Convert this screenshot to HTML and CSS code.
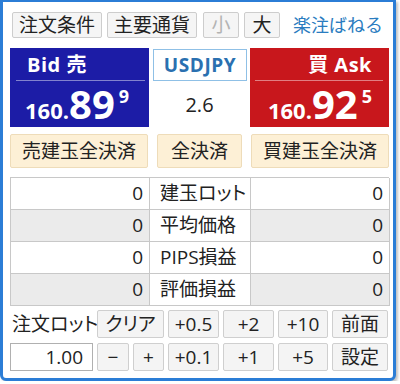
FILE: index.html
```html
<!DOCTYPE html>
<html lang="ja">
<head>
<meta charset="utf-8">
<title>楽注ばねる</title>
<link rel="stylesheet" href="styles.css">
</head>
<body>
<div class="window">
  <div class="toolbar">
    <div class="tb w90">注文条件</div>
    <div class="tb w90">主要通貨</div>
    <div class="tb sq disabled gap1">小</div>
    <div class="tb sq">大</div>
    <div class="brand">楽注ばねる</div>
  </div>

  <div class="quotes">
    <div class="panel bid">
      <div class="ph">Bid 売</div>
      <div class="price"><span class="pre">160.</span><span class="big">89</span><span class="pip">9</span></div>
    </div>
    <div class="mid">
      <div class="sym">USDJPY</div>
      <div class="spread">2.6</div>
    </div>
    <div class="panel ask">
      <div class="ph">買 Ask</div>
      <div class="price"><span class="pre">160.</span><span class="big">92</span><span class="pip">5</span></div>
    </div>
  </div>

  <div class="actions">
    <div class="act">売建玉全決済</div>
    <div class="act">全決済</div>
    <div class="act">買建玉全決済</div>
  </div>

  <div class="grid">
    <div class="cell val">0</div>
    <div class="cell lbl">建玉ロット</div>
    <div class="cell val">0</div>

    <div class="cell val alt">0</div>
    <div class="cell lbl">平均価格</div>
    <div class="cell val alt">0</div>

    <div class="cell val">0</div>
    <div class="cell lbl">PIPS損益</div>
    <div class="cell val">0</div>

    <div class="cell val alt">0</div>
    <div class="cell lbl">評価損益</div>
    <div class="cell val alt">0</div>
  </div>

  <div class="order">
    <div class="olabel">注文ロット</div>
    <div class="ob span2">クリア</div>
    <div class="ob">+0.5</div>
    <div class="ob">+2</div>
    <div class="ob">+10</div>
    <div class="ob">前面</div>

    <div class="input">1.00</div>
    <div class="ob">−</div>
    <div class="ob">+</div>
    <div class="ob">+0.1</div>
    <div class="ob">+1</div>
    <div class="ob">+5</div>
    <div class="ob">設定</div>
  </div>
</div>
</body>
</html>
```

FILE: styles.css
```css
* { box-sizing: border-box; }

body {
  margin: 0;
  background: #fff;
  font-family: "Open Sans", "Noto Sans CJK JP", sans-serif;
  color: #222;
}

.window {
  width: 396px;
  height: 381px;
  border: 3px solid #2b7dd6;
  border-top-width: 2px;
  border-radius: 0 0 6px 6px;
  box-shadow: 2px 2px 3px rgba(0, 0, 0, 0.25);
  padding: 10px 4px 0 7px;
  background: #fff;
}

/* toolbar */
.toolbar {
  display: flex;
  align-items: center;
  height: 26px;
  padding-left: 2px;
  gap: 5px;
}
.tb {
  height: 26px;
  border: 1px solid #cdcdcd;
  background: #f5f5f5;
  border-radius: 2px;
  font-size: 19px;
  line-height: 24px;
  text-align: center;
}
.w90 { width: 90px; }
.sq { width: 36px; }
.gap1 { margin-left: 1px; }
.disabled { color: #b3b3b3; }
.brand {
  margin-left: auto;
  margin-right: 6px;
  color: #2a7cc0;
  font-size: 18px;
  line-height: 26px;
}

/* quotes */
.quotes {
  display: grid;
  grid-template-columns: 139px 101px 139px;
  height: 79px;
  margin-top: 10px;
}
.panel { color: #fff; }
.bid { background: #1c1ca6; }
.ask { background: #c8171c; text-align: right; }
.ph {
  height: 33px;
  line-height: 34px;
  font-size: 20px;
  font-weight: 700;
  letter-spacing: 0.5px;
  border-bottom: 1px solid rgba(255, 255, 255, 0.45);
}
.bid .ph { margin: 0 4px 0 6px; padding-left: 11px; }
.ask .ph { margin: 0 6px 0 5px; padding-right: 11px; }
.price {
  font-size: 40px;
  line-height: 40px;
  font-weight: 700;
  padding-top: 3px;
  white-space: nowrap;
}
.bid .price { padding-left: 15px; }
.ask .price { padding-right: 17px; }
.pre { font-size: 22px; line-height: 1; }
.pip { font-size: 18px; line-height: 1; vertical-align: 16px; margin-left: 4px; }

.mid {
  display: flex;
  flex-direction: column;
}
.sym {
  margin: 1px 3px 0 4px;
  height: 32px;
  border: 1px solid #8fc0e6;
  background: #fff;
  color: #2a70b0;
  font-weight: 700;
  font-size: 19px;
  line-height: 30px;
  letter-spacing: 0.6px;
  text-align: center;
}
.spread {
  flex: 1;
  display: flex;
  align-items: center;
  justify-content: center;
  font-size: 20px;
}

/* action buttons */
.actions {
  display: grid;
  grid-template-columns: 138px 85px 138px;
  justify-content: space-between;
  margin-top: 7px;
  height: 34px;
}
.act {
  background: #fdf0d6;
  border: 1px solid #eedcb9;
  border-radius: 2px;
  font-size: 19px;
  line-height: 32px;
  text-align: center;
}

/* position table */
.grid {
  margin-top: 9px;
  display: grid;
  grid-template-columns: 139px 101px 139px;
  grid-auto-rows: 32px;
  border-top: 1px solid #c8c8c8;
  border-left: 1px solid #c8c8c8;
}
.cell {
  border-right: 1px solid #c8c8c8;
  border-bottom: 1px solid #c8c8c8;
  font-size: 19px;
  line-height: 31px;
  white-space: nowrap;
}
.val { text-align: right; padding-right: 6px; }
.lbl { padding-left: 10px; font-feature-settings: "palt"; }
.alt { background: #ebebeb; }

/* order area */
.order {
  margin-top: 4px;
  display: grid;
  grid-template-columns: 83px 32px 31px 51px 51px 50px 56px;
  grid-auto-rows: 28px;
  column-gap: 4px;
  row-gap: 5px;
}
.ob {
  background: #f4f4f4;
  border: 1px solid #cfcfcf;
  border-radius: 2px;
  font-size: 19px;
  line-height: 26px;
  text-align: center;
  white-space: nowrap;
}
.span2 { grid-column: span 2; font-feature-settings: "palt"; }
.olabel {
  font-size: 19px;
  line-height: 28px;
  padding-left: 2px;
  white-space: nowrap;
  font-feature-settings: "palt";
}
.input {
  border: 1px solid #b0b0b0;
  background: #fff;
  text-align: right;
  padding-right: 9px;
  font-size: 19px;
  line-height: 26px;
}
```
